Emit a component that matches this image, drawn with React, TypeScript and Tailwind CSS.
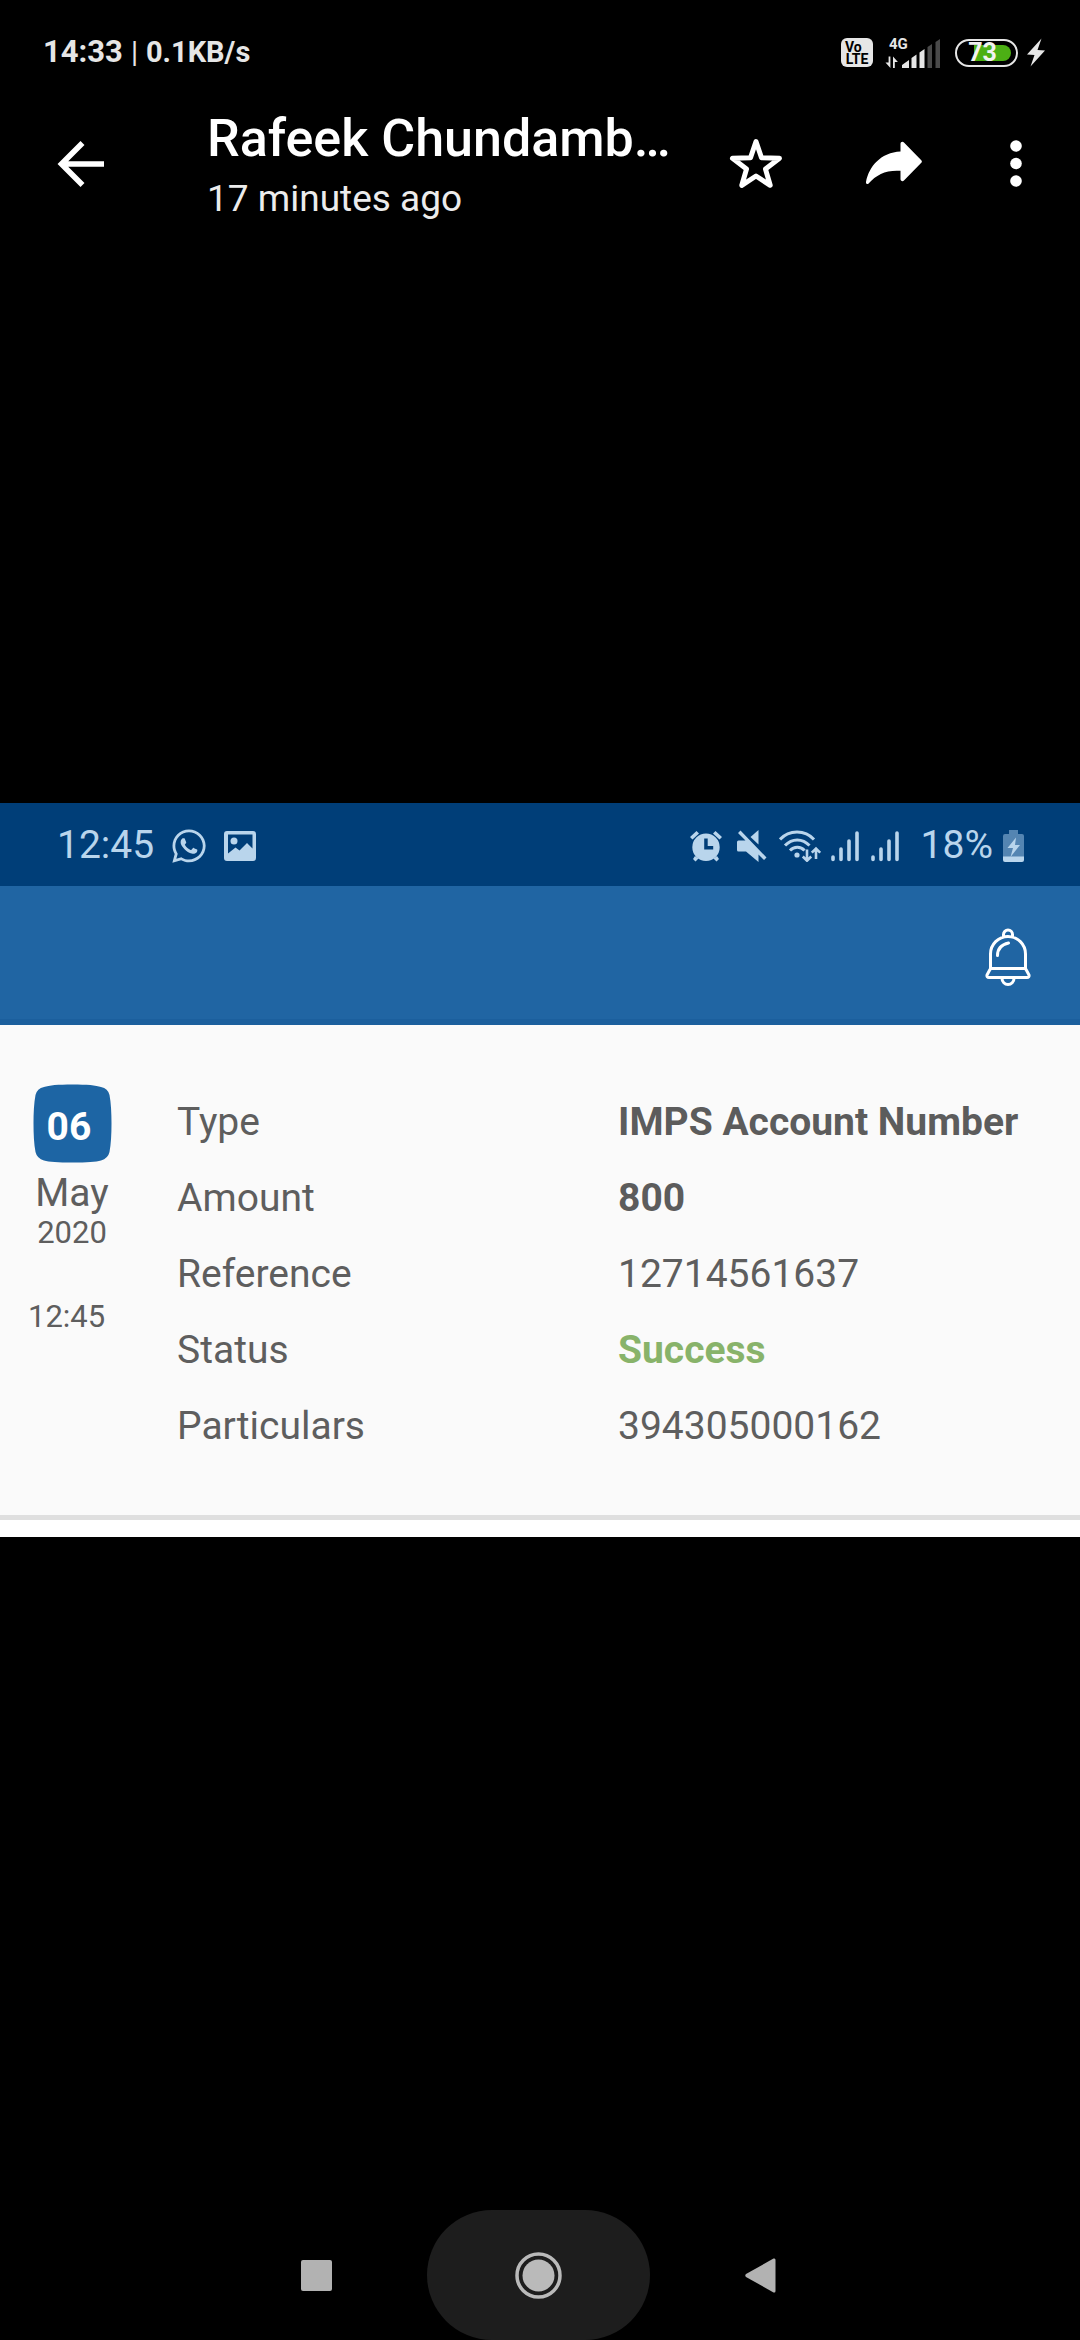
import type { ReactNode } from "react";
import { FaWhatsapp } from "react-icons/fa";

const details = [
  { label: "Type", value: "IMPS Account Number", tone: "font-bold text-[#5c5c5c]" },
  { label: "Amount", value: "800", tone: "font-bold text-[#5c5c5c]" },
  { label: "Reference", value: "12714561637", tone: "" },
  { label: "Status", value: "Success", tone: "font-bold text-[#88b36a]" },
  { label: "Particulars", value: "394305000162", tone: "" },
];

function IconButton({ label, className, children }: { label: string; className: string; children: ReactNode }) {
  return (
    <button type="button" aria-label={label} className={`flex shrink-0 items-center justify-center ${className}`}>
      {children}
    </button>
  );
}

function DeviceStatusBar() {
  return (
    <div className="flex h-[105px] items-center justify-between pl-[43px] pr-[34px] text-[#e6e6e6]">
      <p className="flex items-baseline gap-2 font-bold">
        <span className="text-[31px]">14:33</span>
        <span className="text-[29px] font-normal">|</span>
        <span className="text-[29px]">0.1KB/s</span>
      </p>
      <div className="flex items-center">
        <span className="flex h-[29px] w-8 flex-col items-center justify-center rounded-[6px] bg-[#e6e6e6] text-[14px] font-bold leading-[12px] text-black">
          <span className="self-start pl-1">Vo</span>
          <span>LTE</span>
        </span>
        <svg className="ml-3 h-[32px] w-[56px] overflow-visible" viewBox="0 0 56 32" fill="#e6e6e6">
          <text x="4" y="12" className="text-[15px] font-bold">4G</text>
          <path d="M3.6 19.5h1.8V31L.5 25.6h3.1zM8 31V19.5l4.9 5.4H9.8V31z" />
          <path d="M17 31v-3l7-5v8zM26.500 31V21l5-3.500V31zM34.500 31V15.500l5-3.500v19z" />
          <path d="M42.500 31V10l4.500-3v24zM50.500 31V5l4.500-3v29z" fill="#4a4a4a" />
        </svg>
        <span className="relative ml-3.5 flex h-[28px] w-[63px] items-center justify-center rounded-full border-2 border-[#e6e6e6]">
          <span className="absolute right-[5px] h-4 w-[37px] rounded-r-full bg-[#4caf14]" />
          <span className="relative pr-2 text-[25px] font-bold leading-[24px] text-[#f2f2f2]">73</span>
        </span>
        <svg className="ml-2 h-[29px] w-5" viewBox="0 0 20 29" fill="#e6e6e6">
          <path d="M15.500.500 1 16.500l7.500.500-4 11.500L19 12.500 11.500 12z" />
        </svg>
      </div>
    </div>
  );
}

function Toolbar() {
  return (
    <div className="flex h-[115px] items-start">
      <IconButton label="Back" className="ml-9 h-[118px] w-[90px]">
        <svg className="h-[46px] w-[48px]" viewBox="0 0 48 46" fill="none" stroke="#fff" strokeWidth="5.600">
          <path d="M25.500 2 4.500 23l21 21M5 23h42" />
        </svg>
      </IconButton>
      <div className="ml-[81px] min-w-0 flex-1 text-white">
        <h1 className="truncate text-[52px] font-medium leading-[68px]">Rafeek Chundamb…</h1>
        <p className="text-[37px] leading-[52px] text-[#ececec]">17 minutes ago</p>
      </div>
      <IconButton label="Star" className="ml-6 h-[116px] w-[100px]">
        <svg className="h-[52px] w-[54px]" viewBox="0 0 54 52" fill="none" stroke="#fff" strokeWidth="5" strokeLinejoin="round">
          <path d="m27 4.500 5.500 16.300 18 .5-14 10.800 4.700 16.200L27 39l-14.200 9.300 4.700-16.200-14-10.800 18-.5z" />
        </svg>
      </IconButton>
      <IconButton label="Forward" className="ml-9 h-[116px] w-[104px]">
        <svg className="h-[44px] w-[58px]" viewBox="0 0 58 44" fill="#fff">
          <path d="M1 41C4 25 16 11.500 35.500 10.500V3c0-2.200 2.200-2.800 3.700-1.300L56.300 19.200c.8.8.8 1.800 0 2.600L39.200 39.300c-1.500 1.500-3.700.9-3.700-1.300v-8.200c-14-1-24 3.500-31.900 12.800C2.600 43.700.7 43 1 41z" />
        </svg>
      </IconButton>
      <IconButton label="More options" className="ml-10 mr-[34px] h-[118px] w-[60px]">
        <svg className="h-[48px] w-3" viewBox="0 0 12 48" fill="#fff">
          <circle cx="6" cy="6" r="5.800" />
          <circle cx="6" cy="23.500" r="5.800" />
          <circle cx="6" cy="41" r="5.800" />
        </svg>
      </IconButton>
    </div>
  );
}

function SignalBars() {
  return (
    <svg className="h-8 w-7" viewBox="0 0 28 32" fill="none" stroke="#b9d5ec" strokeWidth="3.600" strokeLinecap="round">
      <path d="M2 27v2.500M10 19v10.500M18 11v18.500M26 3v26.500" />
    </svg>
  );
}

function PhotoStatusBar() {
  return (
    <div className="flex h-[83px] items-center justify-between bg-[#003e78] pl-[57px] pr-14 pt-0.5 text-[39px] text-[#b9d5ec]">
      <div className="flex items-center">
        <span>12:45</span>
        <FaWhatsapp className="ml-4 h-[38px] w-[38px]" />
        <svg className="ml-4 h-[30px] w-8" viewBox="0 0 32 30" fill="currentColor">
          <path fillRule="evenodd" d="M3 0h26q3 0 3 3v24q0 3-3 3H3q-3 0-3-3V3q0-3 3-3zm1 3.500v19l7.500-6 4 3 7.500-7.500 5.500 5.500V3.500z" />
          <circle cx="10" cy="10" r="3.500" />
        </svg>
      </div>
      <div className="flex items-center">
        <svg className="h-8 w-[34px]" viewBox="0 0 34 32" fill="currentColor">
          <path d="m1 7 6.500-6 2.500 2.500L3.500 9.500zM33 7l-6.500-6L24 3.500l6.500 6z" />
          <path d="m6 26 3.500 2.500-3 3L4 29zM28 26l-3.500 2.500 3 3L30 29z" />
          <path fillRule="evenodd" d="M17 3.500a13.700 13.700 0 1 1 0 27.400 13.700 13.700 0 0 1 0-27.400zM15.200 8.500v11h9v-3.400h-5.500V8.500z" />
        </svg>
        <svg className="ml-3.5 h-8 w-[30px]" viewBox="0 0 30 32" fill="currentColor">
          <path d="M21.500 0v14.500L13.500 7z" />
          <path d="M3.500.5 29.500 27.500 27 30l-5.500-5.500V32L9 21.500H1.500Q0 21.500 0 20v-8q0-1.500 1.500-1.500h7L1 3z" />
        </svg>
        <svg className="ml-3 h-8 w-[42px]" viewBox="0 0 42 32" fill="none" stroke="currentColor" strokeWidth="3">
          <path d="M1 9.500C10-.5 26-.5 35 9.500M6 15.500c7-7.500 17.500-7.500 24.500 0M11 20.500c4-4 10.500-4.500 14.500 0" />
          <circle cx="18" cy="25" r="2.600" fill="currentColor" stroke="none" />
          <path d="M28 19.500v11M23.800 26.500l4.200 4.200 4.200-4.200M37 29V18.500M32.800 22.700l4.200-4.200 4.200 4.200" strokeWidth="2.600" />
        </svg>
        <span className="ml-2.5 flex gap-3">
          <SignalBars />
          <SignalBars />
        </span>
        <span className="ml-[22px]">18%</span>
        <svg className="ml-2.5 h-8 w-[21px]" viewBox="0 0 21 32" fill="currentColor">
          <path d="M6 0h9v4h4q2 0 2 2v21H0V6q0-2 2-2h4z" fill="#5485b2" />
          <path d="M0 26.500h21V30q0 2-2 2H2q-2 0-2-2z" />
          <path d="M13 7.500 4.500 18H10l-2.500 9L17 15h-5z" />
        </svg>
      </div>
    </div>
  );
}

function Transaction() {
  return (
    <article className="flex border-b-[5px] border-[#dfdfdf] bg-[#fafafa] pb-[51px] pt-[59px] text-[39px] text-[#5e5e5e]">
      <div className="ml-[28px] mr-[61px] flex w-[88px] shrink-0 flex-col items-center">
        <span className="relative flex h-[79px] w-[79px] items-center justify-center pt-2 font-bold text-white">
          <svg className="absolute inset-0 h-full w-full" viewBox="0 0 79 79" fill="#1d65a4">
            <path d="M39.500.5C54 .5 63 1.300 68 3q7 1.500 8.500 8c1.500 8 2 18 2 28.500s-.5 20.500-2 28.500q-1.500 6.500-8.500 8.500c-5 1.500-14 2-28.500 2S16 78 11 76.500Q4 74.500 2.500 68C1 60 .5 50 .5 39.500S1 19 2.500 11Q4 4.500 11 3C16 1.300 25 .5 39.500.5z" />
          </svg>
          <span className="relative mr-1.5">06</span>
        </span>
        <span className="mt-2.5 leading-[41px]">May</span>
        <span className="text-[31px] leading-[38px]">2020</span>
        <time className="mt-[46px] self-start text-[31px] leading-[38px]">12:45</time>
      </div>
      <dl className="flex-1">
        {details.map((d) => (
          <div key={d.label} className="grid grid-cols-[441fr_462fr] leading-[76px]">
            <dt>{d.label}</dt>
            <dd className={d.tone}>{d.value}</dd>
          </div>
        ))}
      </dl>
    </article>
  );
}

function Photo() {
  return (
    <section className="w-full bg-white pb-[17px]">
      <PhotoStatusBar />
      <div className="flex h-[139px] items-center justify-end bg-[#2065a3] pr-[49px] pt-0.5 shadow-[inset_0_-6px_0_#1b5f9d]">
        <IconButton label="Notifications" className="">
          <svg className="h-[58px] w-[46px]" viewBox="0 0 46 58" fill="none" stroke="#fff" strokeWidth="3" strokeLinecap="round" strokeLinejoin="round">
            <path d="M18.500 9V6.500a4.500 4.500 0 0 1 9 0V9M5.500 41V26a17.500 17.500 0 0 1 35 0v15M5.500 40.500h35l3.500 6.500q.5 2.500-2 2.500H4q-2.500 0-2-2.500zM17 50.500a6 6 0 0 0 12 0M12.500 27.500q0-10 11-12.500" />
          </svg>
        </IconButton>
      </div>
      <Transaction />
    </section>
  );
}

function NavigationBar() {
  return (
    <nav className="flex h-[130px] items-center justify-center gap-[95px] pr-1">
      <IconButton label="Recent apps" className="h-full w-[31px]">
        <span className="h-[31px] w-[31px] rounded-[2px] bg-[#b2b2b2]" />
      </IconButton>
      <IconButton label="Home" className="h-full w-[223px] rounded-full bg-[#1d1d1d]">
        <svg className="h-[47px] w-[47px]" viewBox="0 0 47 47" fill="#bababa">
          <circle cx="23.500" cy="23.500" r="21.500" fill="none" stroke="#bababa" strokeWidth="3.500" />
          <circle cx="23.500" cy="23.500" r="16" />
        </svg>
      </IconButton>
      <IconButton label="Back" className="h-full w-[31px]">
        <svg className="h-[35px] w-[31px]" viewBox="0 0 31 35" fill="#b2b2b2">
          <path d="M1 16 28.500.6q2-.8 2 1.400v31q0 2.200-2 1.400L1 19q-1.500-1.500 0-3z" />
        </svg>
      </IconButton>
    </nav>
  );
}

export default function App() {
  return (
    <div className="flex min-h-screen flex-col bg-black font-[Roboto,sans-serif]">
      <header>
        <DeviceStatusBar />
        <Toolbar />
      </header>
      <main className="flex flex-1 items-center pb-[90px]">
        <Photo />
      </main>
      <NavigationBar />
    </div>
  );
}
